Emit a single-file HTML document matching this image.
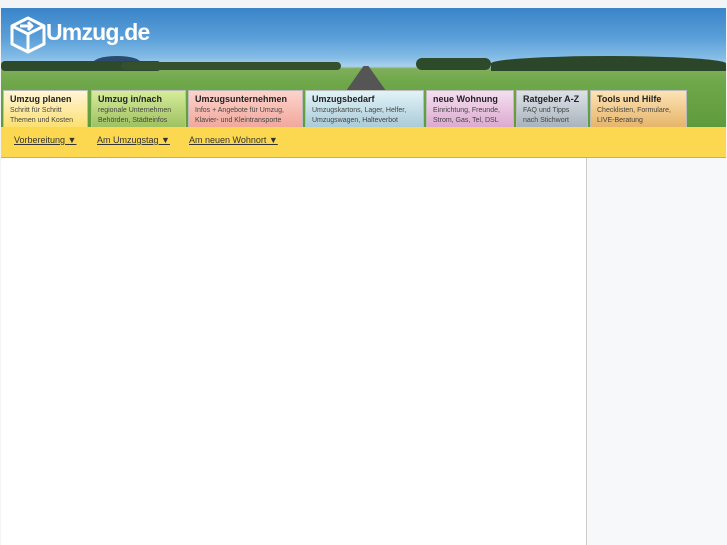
<!DOCTYPE html><html><head><style>
body{margin:0;width:727px;height:545px;background:#f3f4f6;font-family:"Liberation Sans",sans-serif;position:relative;overflow:hidden}
#hdr{position:absolute;left:1px;top:8px;width:725px;height:119px;background:linear-gradient(#3a84c9 0%,#5a9fd8 25%,#86bde6 42%,#a9d2ee 49%,#7fae5a 51%,#6fa84a 62%,#5e9a3c 100%);overflow:hidden}
.hill{position:absolute;background:#2d4a2a;border-radius:50% 50% 0 0}
.tab{position:absolute;top:90px;height:37px;border:1px solid #bbb;border-bottom:none;box-sizing:border-box;padding:2px 6px;font-size:7px;color:#444;line-height:10px}
.tab b{display:block;font-size:9px;color:#222;margin-bottom:1px;line-height:12px}
#bar{position:absolute;left:1px;top:127px;width:725px;height:30px;background:#fbd84f;border-bottom:1px solid #c9b05a}
#bar a{position:absolute;top:8px;font-size:9px;color:#333;text-decoration:underline}
#main{position:absolute;left:1px;top:158px;width:585px;height:387px;background:#fff}
#side{position:absolute;left:586px;top:158px;width:141px;height:387px;background:#f7f8fa;border-left:1px solid #ccc}
</style></head><body>
<div id="hdr">
<div class="hill" style="left:92px;top:48px;width:48px;height:14px;background:#2c4a6e"></div>
<div class="hill" style="left:0;top:53px;width:160px;height:10px;border-radius:4px"></div>
<div class="hill" style="left:120px;top:54px;width:220px;height:8px;border-radius:4px;background:#34502c"></div>
<div class="hill" style="left:415px;top:50px;width:75px;height:12px;border-radius:10px"></div>
<div class="hill" style="left:490px;top:48px;width:235px;height:15px;background:#2b4628"></div>
<div style="position:absolute;left:340px;top:58px;width:50px;height:32px;background:#555;clip-path:polygon(45% 0,55% 0,100% 100%,0 100%)"></div>
<svg style="position:absolute;left:9px;top:8px" width="36" height="38" viewBox="0 0 36 38"><g fill="none" stroke="#fff" stroke-width="3" stroke-linejoin="round"><path d="M18 2 L34 10 L34 28 L18 36 L2 28 L2 10 Z"/><path d="M2 10 L18 18 L34 10 M18 18 L18 36"/><path d="M10 10 L22 10 M18 6 L22 10 L18 14"/></g></svg>
<div style="position:absolute;left:45px;top:11px;font-size:23px;font-weight:bold;color:#fff;letter-spacing:-0.8px">Umzug.de</div>
</div>
<div class="tab" style="left:3px;width:85px;background:linear-gradient(#fff5d8,#fde070)"><b>Umzug planen</b>Schritt für Schritt<br>Themen und Kosten</div>
<div class="tab" style="left:91px;width:95px;background:linear-gradient(#d6ec9a,#9fc161)"><b>Umzug in/nach</b>regionale Unternehmen<br>Behörden, Städteinfos</div>
<div class="tab" style="left:188px;width:115px;background:linear-gradient(#fdd3cc,#f1a89c)"><b>Umzugsunternehmen</b>Infos + Angebote für Umzug,<br>Klavier- und Kleintransporte</div>
<div class="tab" style="left:305px;width:119px;background:linear-gradient(#e2f3f8,#aacbd8)"><b>Umzugsbedarf</b>Umzugskartons, Lager, Helfer,<br>Umzugswagen, Halteverbot</div>
<div class="tab" style="left:426px;width:88px;background:linear-gradient(#f5dff0,#dcaad0)"><b>neue Wohnung</b>Einrichtung, Freunde,<br>Strom, Gas, Tel, DSL</div>
<div class="tab" style="left:516px;width:72px;background:linear-gradient(#dde2e8,#a9b3bd)"><b>Ratgeber A-Z</b>FAQ und Tipps<br>nach Stichwort</div>
<div class="tab" style="left:590px;width:97px;background:linear-gradient(#fde3b5,#e6b56a)"><b>Tools und Hilfe</b>Checklisten, Formulare,<br>LIVE-Beratung</div>
<div id="bar"><a style="left:13px">Vorbereitung ▼</a><a style="left:96px">Am Umzugstag ▼</a><a style="left:188px">Am neuen Wohnort ▼</a></div>
<div id="main"></div><div id="side"></div>
</body></html>
